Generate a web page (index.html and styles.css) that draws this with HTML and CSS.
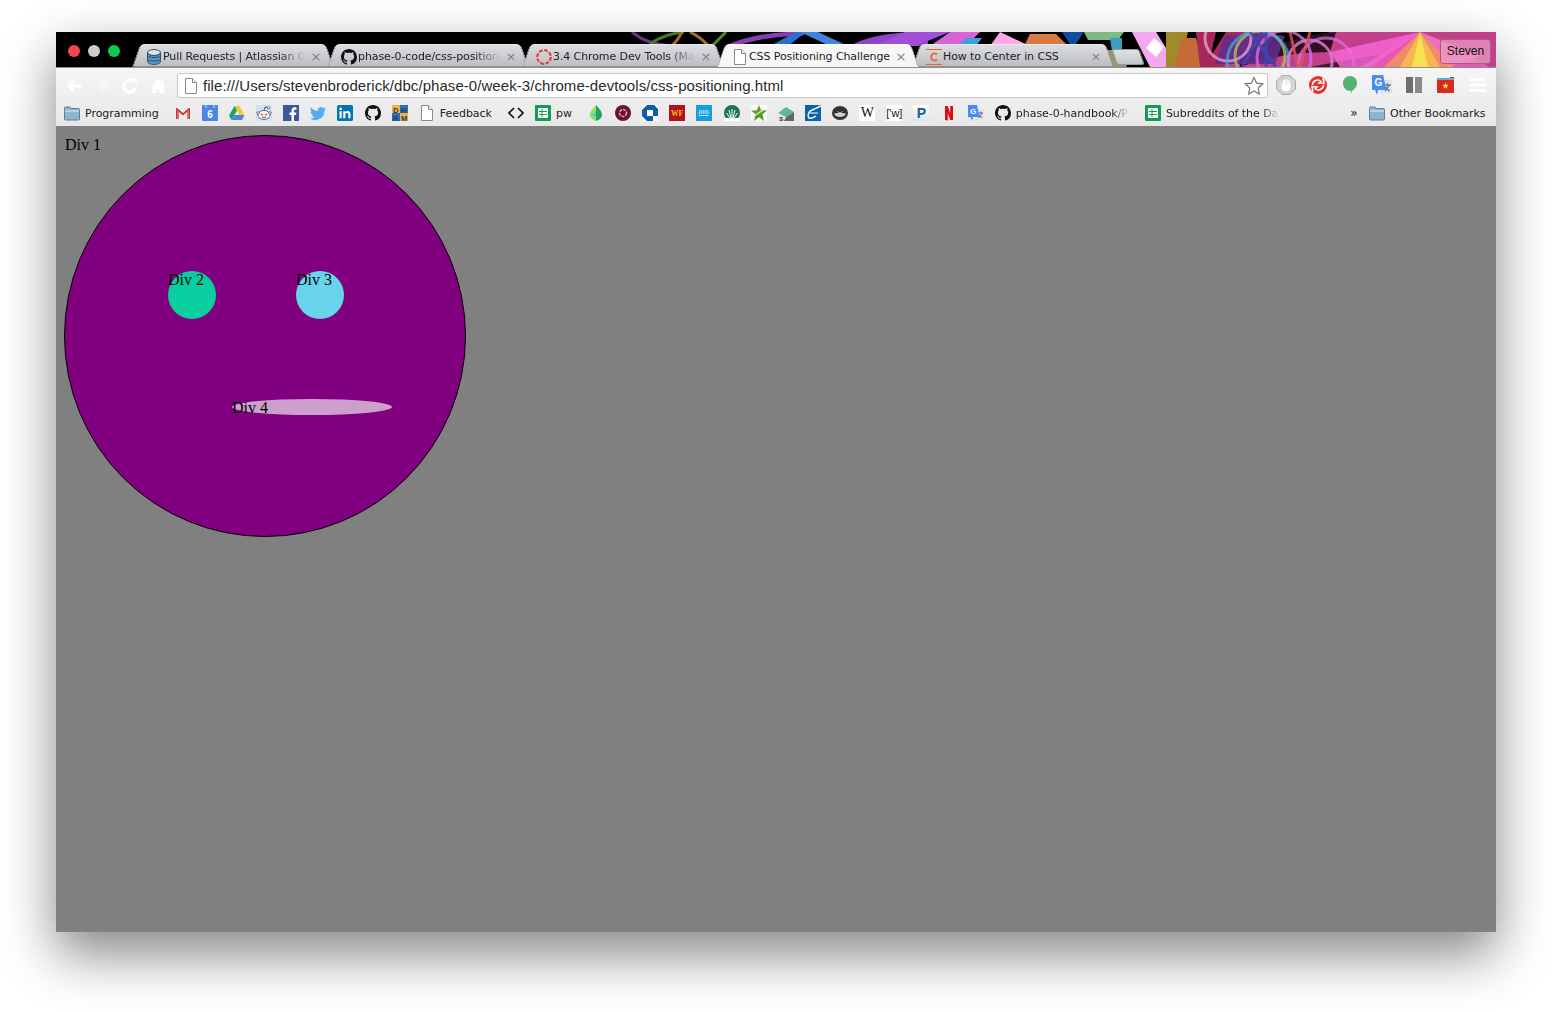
FILE: index.html
```html
<!DOCTYPE html>
<html lang="en">
<head>
    <meta charset="UTF-8">
    <title>CSS Positioning Challenge</title>
    <link rel="stylesheet" href="styles.css">
</head>
<body>

    <!-- shared icons -->
    <svg class="defs" aria-hidden="true">
        <symbol id="i-folder" viewBox="0 0 16 16">
            <path d="M.5 3.5V14a1 1 0 0 0 1 1h13a1 1 0 0 0 1-1V4.5a1 1 0 0 0-1-1H7L6 2H1.5a1 1 0 0 0-1 1.5z" fill="#8fb4cf" stroke="#5d7f9b"/>
            <path d="M1 5h14v2H1z" fill="#b9d2e4"/>
        </symbol>
        <symbol id="i-doc" viewBox="0 0 16 16">
            <path d="M2.5 .5h7l4 4v11h-11z" fill="#fff" stroke="#8a8a8a"/>
            <path d="M9.5 .5v4h4" fill="#eee" stroke="#8a8a8a"/>
        </symbol>
        <symbol id="i-octo" viewBox="0 0 16 16">
            <path d="M8 0C3.58 0 0 3.58 0 8c0 3.54 2.29 6.53 5.47 7.59.4.07.55-.17.55-.38 0-.19-.01-.82-.01-1.49-2.01.37-2.53-.49-2.69-.94-.09-.23-.48-.94-.82-1.13-.28-.15-.68-.52-.01-.53.63-.01 1.08.58 1.23.82.72 1.21 1.87.87 2.33.66.07-.52.28-.87.51-1.07-1.78-.2-3.64-.89-3.64-3.95 0-.87.31-1.59.82-2.15-.08-.2-.36-1.02.08-2.12 0 0 .67-.21 2.2.82.64-.18 1.32-.27 2-.27.68 0 1.36.09 2 .27 1.53-1.04 2.2-.82 2.2-.82.44 1.1.16 1.92.08 2.12.51.56.82 1.27.82 2.15 0 3.07-1.87 3.75-3.65 3.95.29.25.54.73.54 1.48 0 1.07-.01 1.93-.01 2.2 0 .21.15.46.55.38A8.013 8.013 0 0 0 16 8c0-4.42-3.58-8-8-8z" fill="#111"/>
        </symbol>
        <symbol id="i-sheet" viewBox="0 0 16 16">
            <rect width="16" height="16" rx="1" fill="#0f9d58"/>
            <path d="M3.5 3.5h9v9h-9z" fill="#fff" stroke="#fff"/>
            <path d="M4 6.500h8M4 9.500h8M7 4v8" stroke="#0f9d58"/>
        </symbol>
        <symbol id="i-translate" viewBox="0 0 16 16">
            <rect x="7" y="4" width="9" height="11" fill="#dfe3e6"/>
            <path d="M10 8h5M12.500 6.500v1.500M10.500 13l3.500-5M11 9.500l3 3.500" stroke="#5f6b75" fill="none"/>
            <path d="M0 0h9l2.500 12H5l-1 4-1.500-4H0z" fill="#4a8af4"/>
            <text x="2" y="9" class="g-mark">G</text>
        </symbol>
    </svg>

    <div class="window">

        <div class="titlebar">
            <svg class="wallpaper" viewBox="56 32 1440 35" preserveAspectRatio="none" aria-hidden="true">
                <rect x="56" y="32" width="1440" height="35" fill="#000"/>
                <g fill="none" stroke-width="3" opacity=".85">
                    <path d="M632 32q14 12 40 14" stroke="#7a3f9c"/>
                    <path d="M650 44q14-10 34-12" stroke="#4d8f2c"/>
                    <path d="M672 46q6-6 10-14" stroke="#d0762a"/>
                    <path d="M690 32q12 6 18 14" stroke="#c2802f"/>
                    <path d="M712 46q8-8 14-14" stroke="#5aa02f"/>
                </g>
                <path d="M724 46q36-16 84-14l-6 4q-40 0-70 12z" fill="#8a3fb0"/>
                <path d="M770 46l26-14h10l-18 14z" fill="#2d6fd0"/>
                <path d="M800 32l30 14h18l-30-14z" fill="#3f84e0"/>
                <path d="M850 46q20-12 60-14h18v14z" fill="#8c44c8"/>
                <path d="M905 32h45l-35 14h-40z" fill="#a14fd8"/>
                <path d="M950 32h30l-14 14h-36z" fill="#d863d8"/>
                <path d="M966 38h16l-6 8h-18z" fill="#3f9fdc"/>
                <path d="M1000 32l30 14h-40z" fill="#ffa8e8"/>
                <path d="M1030 34h26l12 12h-44z" fill="#d97a45"/>
                <path d="M1062 32h22l-8 12h-6z" fill="#0e4d9e"/>
                <path d="M1084 32h40l-6 8h-30z" fill="#7dbb83"/>
                <path d="M1110 38h12v28h-8z" fill="#3d9cc0"/>
                <path d="M1095 50h24l8 17h-22z" fill="#8f9a72"/>
                <path d="M1132 32h24l22 35h-28z" fill="#f4a8f0"/>
                <path d="M1154 38l10 9-8 10-10-9z" fill="#fff"/>
                <path d="M1166 32h22l-8 35h-14z" fill="#a08a2a"/>
                <path d="M1182 38h14l8 29h-30z" fill="#c76a3a"/>
                <path d="M1196 32h20l-8 35h-8z" fill="#a8285a"/>
                <path d="M1204 67l22-35h50l-20 35z" fill="#a8285a"/>
                <path d="M1222 67q50-26 110-35h164v35z" fill="#c23f8a"/>
                <path d="M1240 52q40-16 96-20l-6 20q-50 0-90 15z" fill="#000" opacity=".75"/>
                <path d="M1310 67q60-12 100-16v16z" fill="#000" opacity=".6"/>
                <path d="M1225 36q40-4 60 0l-10 28h-60z" fill="#5f2d8c" opacity=".9"/>
                <g fill="none" stroke-width="3">
                    <circle cx="1228" cy="38" r="23" stroke="#f0b0e0" opacity=".7"/>
                    <circle cx="1260" cy="56" r="25" stroke="#a8c060" opacity=".8"/>
                    <circle cx="1258" cy="62" r="31" stroke="#4aa6d8" opacity=".7"/>
                    <circle cx="1284" cy="58" r="27" stroke="#d070e0" opacity=".8"/>
                    <circle cx="1310" cy="62" r="22" stroke="#e080d0" opacity=".8"/>
                    <circle cx="1326" cy="66" r="28" stroke="#e070e8" opacity=".7"/>
                    <path d="M1250 32l26 35M1266 32v35M1262 32l-20 35" stroke="#3a48b8" opacity=".8"/>
                    <path d="M1290 32l8 35M1310 32l-10 35" stroke="#e0525a" opacity=".8"/>
                </g>
                <path d="M1360 67l60-35 70 35z" fill="#e758b4"/>
                <path d="M1330 52l90-20-50 35h-30z" fill="#f768d8" opacity=".8"/>
                <path d="M1420 32l60 24-30 11h-60z" fill="#ee70b8"/>
                <path d="M1384 67l36-35 34 35z" fill="#f08a6a"/>
                <path d="M1400 67l20-35 20 35z" fill="#f6b84e"/>
                <path d="M1412 67l8-35 8 35z" fill="#f8e050"/>
            </svg>

            <div class="lights">
                <span class="light red"></span>
                <span class="light grey"></span>
                <span class="light green"></span>
            </div>

            <div class="tabs">
                <div class="tab">
                    <svg class="tab-icon" viewBox="0 0 16 16">
                        <ellipse cx="8" cy="3.500" rx="6.500" ry="3" fill="#dfe6ec" stroke="#35506a"/>
                        <path d="M1.500 3.500v9c0 1.700 3 3 6.500 3s6.500-1.300 6.500-3v-9c0 1.700-3 3-6.500 3s-6.500-1.300-6.500-3z" fill="#5a93c4" stroke="#35506a"/>
                        <path d="M1.500 7c1 2 12 2 13 0M1.500 10.500c1 2 12 2 13 0" fill="none" stroke="#2f4f6f"/>
                    </svg>
                    <span class="tab-title fade">Pull Requests | Atlassian G</span>
                    <span class="tab-close">&#215;</span>
                </div>
                <div class="tab">
                    <svg class="tab-icon" viewBox="0 0 16 16"><use href="#i-octo"/></svg>
                    <span class="tab-title fade">phase-0-code/css-position</span>
                    <span class="tab-close">&#215;</span>
                </div>
                <div class="tab">
                    <svg class="tab-icon" viewBox="0 0 16 16">
                        <circle cx="8" cy="8" r="6.800" fill="none" stroke="#e8403a" stroke-width="2.200" stroke-dasharray="3.800 1.530"/>
                    </svg>
                    <span class="tab-title fade">3.4 Chrome Dev Tools (Mar</span>
                    <span class="tab-close">&#215;</span>
                </div>
                <div class="tab active">
                    <svg class="tab-icon tab-icon-doc" viewBox="0 0 16 16"><use href="#i-doc"/></svg>
                    <span class="tab-title">CSS Positioning Challenge</span>
                    <span class="tab-close">&#215;</span>
                </div>
                <div class="tab">
                    <svg class="tab-icon" viewBox="0 0 16 16">
                        <path d="M0 .5h16M0 15.500h16" stroke="#f0603a"/>
                        <path d="M11 5.500A3.500 3.500 0 1 0 11 10.500" fill="none" stroke="#f0603a" stroke-width="1.800"/>
                    </svg>
                    <span class="tab-title">How to Center in CSS</span>
                    <span class="tab-close">&#215;</span>
                </div>
                <div class="new-tab"></div>
            </div>

            <div class="profile">Steven</div>
        </div>

        <div class="chrome">
            <div class="toolbar">
                <div class="nav-btns">
                    <svg class="nav-icon" viewBox="0 0 16 16"><path d="M15 8H4M8 3 3 8l5 5" fill="none" stroke="#fff" stroke-width="3"/></svg>
                    <svg class="nav-icon faint" viewBox="0 0 16 16"><path d="M1 8h11M8 3l5 5-5 5" fill="none" stroke="#fff" stroke-width="3"/></svg>
                    <svg class="nav-icon" viewBox="0 0 16 16"><path d="M13.500 9.500A6 6 0 1 1 11.500 3.500" fill="none" stroke="#fff" stroke-width="3"/><path d="M9 0h6v6z" fill="#fff"/></svg>
                    <svg class="nav-icon" viewBox="0 0 16 16"><path d="M8 1 0 9h2.500v6h4v-4h3v4h4V9H16l-3-3V2h-2v2z" fill="#fff"/></svg>
                </div>
                <div class="omnibox">
                    <svg class="omni-doc" viewBox="0 0 16 16"><use href="#i-doc"/></svg>
                    <span class="url">file:///Users/stevenbroderick/dbc/phase-0/week-3/chrome-devtools/css-positioning.html</span>
                    <svg class="omni-star" viewBox="0 0 20 20"><path d="m10 1.500 2.600 5.600 6.100.7-4.500 4.200 1.200 6.100L10 15l-5.400 3.100 1.200-6.100L1.300 7.800l6.100-.7z" fill="#fff" stroke="#777" stroke-width="1.200"/></svg>
                </div>
                <div class="extensions">
                    <svg class="ext" viewBox="0 0 20 20">
                        <path d="M6 .5h8L19.500 6v8L14 19.500H6L.5 14V6z" fill="#d4d4d4" stroke="#aaa"/>
                        <path d="M5.500 8v4c0 3 2 4.500 4.500 4.500s4.500-1.500 4.500-4.500V6.500h-1.200V10h-.6V4.800h-1.300V10h-.6V4h-1.300v6h-.6V5H7.100v6.500H6.500V8z" fill="#fff"/>
                    </svg>
                    <svg class="ext" viewBox="0 0 20 20">
                        <circle cx="10" cy="10" r="9" fill="#e8332c"/>
                        <path d="M4.500 10a5 5 0 0 1 8.500-3.500l-2 1.500 5 .5-.5-4.500-1 1M15.500 10A5 5 0 0 1 7 13.500l2-1.500-5-.5.5 4.500 1-1" fill="none" stroke="#fff" stroke-width="1.500"/>
                    </svg>
                    <svg class="ext" viewBox="0 0 20 20"><path d="M10 1c4 0 7 3 7 7 0 4-3 6.500-5 8l-1 3v-3C6 16 3 12.500 3 8c0-4 3-7 7-7z" fill="#52b46e"/></svg>
                    <svg class="ext" viewBox="0 0 16 16"><use href="#i-translate"/></svg>
                    <svg class="ext" viewBox="0 0 20 20"><rect x="2" y="2" width="7" height="16" fill="#6e6e6e"/><rect x="11" y="2" width="7" height="16" fill="#8a8a8a"/></svg>
                    <svg class="ext" viewBox="0 0 20 20">
                        <path d="M1 3h12l2-1h3v16H1z" fill="#d8291f"/>
                        <path d="M1 3h17v2H1z" fill="#5db0c8"/>
                        <path d="m9.500 7.500 1 2.200 2.300.2-1.800 1.500.6 2.300-2.100-1.200-2.100 1.200.6-2.300L6.200 9.900l2.300-.2z" fill="#f6d46a"/>
                    </svg>
                    <svg class="ext" viewBox="0 0 20 20"><path d="M2 3h16v3H2zM2 8.500h16v3H2zM2 14h16v3H2z" fill="#fff"/></svg>
                </div>
            </div>

            <div class="bookmarks">
                <div class="bm text"><svg class="bm-icon" viewBox="0 0 16 16"><use href="#i-folder"/></svg><span>Programming</span></div>
                <div class="bm"><svg class="bm-icon" viewBox="0 0 16 16"><path d="M1 3v11h3V7l4 3.500L12 7v7h3V3h-1L8 8 2 3z" fill="#c8372d"/><path d="M4 14V7L2 5.200V14zM12 14V7l2-1.800V14z" fill="#d9d9d9" opacity=".4"/></svg></div>
                <div class="bm"><svg class="bm-icon" viewBox="0 0 16 16"><rect width="16" height="16" rx="1" fill="#4a86e8"/><path d="M4 0v3M12 0v3" stroke="#cfe0fb"/><text x="8" y="13" class="cal-mark">6</text></svg></div>
                <div class="bm"><svg class="bm-icon" viewBox="0 0 16 16"><path d="M5.500 1h5l5 9h-5z" fill="#f7c631"/><path d="M5.500 1 0 10.500 2.500 15l5.500-9.500z" fill="#1ea362"/><path d="M2.500 15h10.500l2.500-5H5.500z" fill="#4a86e8"/></svg></div>
                <div class="bm"><svg class="bm-icon" viewBox="0 0 16 16"><rect width="16" height="16" fill="#cee3f8"/><ellipse cx="8" cy="10" rx="6" ry="4.500" fill="#fff" stroke="#333" stroke-width=".7"/><circle cx="5.700" cy="9.500" r="1.100" fill="#e8452c"/><circle cx="10.300" cy="9.500" r="1.100" fill="#e8452c"/><path d="M5.500 12q2.500 1.500 5 0M8 5.500 9 2l3 .7" fill="none" stroke="#333" stroke-width=".8"/><circle cx="12.500" cy="2.800" r="1.200" fill="#fff" stroke="#333" stroke-width=".6"/><circle cx="2" cy="8" r="1.300" fill="#fff" stroke="#333" stroke-width=".6"/><circle cx="14" cy="8" r="1.300" fill="#fff" stroke="#333" stroke-width=".6"/></svg></div>
                <div class="bm"><svg class="bm-icon" viewBox="0 0 16 16"><rect width="16" height="16" fill="#3b5998"/><path d="M11 16V10h2l.4-2.500H11V6c0-.8.3-1.300 1.300-1.300h1.200V2.500C13.200 2.400 12.500 2.300 11.700 2.300 9.800 2.300 8.500 3.500 8.500 5.600v1.900h-2V10h2v6z" fill="#fff"/></svg></div>
                <div class="bm"><svg class="bm-icon" viewBox="0 0 16 16"><path d="M16 3.500c-.6.300-1.200.4-1.900.5.700-.4 1.200-1 1.400-1.800-.6.400-1.300.6-2.100.8a3.300 3.300 0 0 0-5.600 3C5.100 5.800 2.700 4.500 1.100 2.500c-.9 1.500-.4 3.400 1 4.400-.5 0-1-.2-1.500-.4 0 1.600 1.100 3 2.600 3.300-.5.100-1 .1-1.500 0 .4 1.300 1.600 2.200 3.100 2.300A6.600 6.600 0 0 1 0 13.500 9.300 9.300 0 0 0 14.400 5.200c.6-.5 1.200-1 1.600-1.700z" fill="#55acee"/></svg></div>
                <div class="bm"><svg class="bm-icon" viewBox="0 0 16 16"><rect width="16" height="16" rx="1.500" fill="#0077b5"/><path d="M2.500 6.200h2.200v7H2.500zM6.200 6.200h2.100v1c.4-.7 1.200-1.200 2.300-1.200 2.200 0 2.900 1.400 2.900 3.400v3.800h-2.200V9.800c0-.9-.2-1.800-1.300-1.800s-1.600.8-1.600 1.800v3.400H6.200z" fill="#fff"/><circle cx="3.600" cy="3.900" r="1.300" fill="#fff"/></svg></div>
                <div class="bm"><svg class="bm-icon" viewBox="0 0 16 16"><use href="#i-octo"/></svg></div>
                <div class="bm"><svg class="bm-icon" viewBox="0 0 16 16"><rect width="8" height="8" x="0" fill="#f4b23e"/><rect width="8" height="8" x="8" fill="#2f6db5"/><rect width="8" height="8" y="8" fill="#2f6db5"/><rect width="8" height="8" x="8" y="8" fill="#f4b23e"/><text x="1" y="7.500" class="dh-mark">D</text><text x="9" y="7.500" class="dh-mark">H</text><text x="1" y="15.500" class="dh-mark">R</text><text x="9" y="15.500" class="dh-mark">M</text></svg></div>
                <div class="bm text"><svg class="bm-icon" viewBox="0 0 16 16"><use href="#i-doc"/></svg><span>Feedback</span></div>
                <div class="bm"><svg class="bm-icon" viewBox="0 0 16 16"><path d="M6 3 1 8l5 5M10 3l5 5-5 5" fill="none" stroke="#111" stroke-width="1.600"/></svg></div>
                <div class="bm text"><svg class="bm-icon" viewBox="0 0 16 16"><use href="#i-sheet"/></svg><span>pw</span></div>
                <div class="bm"><svg class="bm-icon" viewBox="0 0 16 16"><path d="M8 0C5 3.500 2 6 2 10c0 3 3 5 6 6z" fill="#8fe070"/><path d="M8 0c3 3.500 6 6 6 10 0 3-3 5-6 6z" fill="#1ea362"/><path d="M3 10q3-1 5-4v6z" fill="#5ec8b0"/></svg></div>
                <div class="bm"><svg class="bm-icon" viewBox="0 0 16 16"><circle cx="8" cy="8" r="8" fill="#6e1230"/><circle cx="8" cy="8" r="3.500" fill="none" stroke="#d8a8b8" stroke-width="1.600" stroke-dasharray="3 1"/></svg></div>
                <div class="bm"><svg class="bm-icon" viewBox="0 0 16 16"><rect width="16" height="16" fill="#fff"/><path d="M5 0h7l4 4v7h-5V5H5zM0 5l5-5v11h6v5H5l-5-5z" fill="#0f5ba7"/></svg></div>
                <div class="bm"><svg class="bm-icon" viewBox="0 0 16 16"><rect width="16" height="16" fill="#b0121b"/><text x="8" y="11" class="wf-mark">WF</text></svg></div>
                <div class="bm"><svg class="bm-icon" viewBox="0 0 16 16"><rect width="16" height="16" fill="#16a0db"/><path d="M3 6h10M2.500 8h11M3 10.500h10" stroke="#fff" stroke-dasharray="1.500 .5"/></svg></div>
                <div class="bm"><svg class="bm-icon" viewBox="0 0 16 16"><circle cx="8" cy="8" r="8" fill="#1f6f5c"/><path d="M8 4v9M5 5l2 8M11 5l-2 8M2.500 8 6 13M13.500 8 10 13" stroke="#fff"/><path d="M0 13h16v3H0z" fill="#fff"/></svg></div>
                <div class="bm"><svg class="bm-icon" viewBox="0 0 16 16"><rect width="16" height="16" fill="#fbfbfb"/><path d="m8 0 2.200 5.500H16l-4.600 3.800L13 16l-5-3.700L3 16l1.600-6.700L0 5.500h5.800z" fill="#5a9a2a"/><path d="M3 11 12 5" stroke="#d9e8c8" stroke-width="1.500"/></svg></div>
                <div class="bm"><svg class="bm-icon" viewBox="0 0 16 16"><path d="M0 8 8 2l8 5-8 5z" fill="#5fb89a"/><path d="M8 12l8-5v9H6z" fill="#666"/><path d="M0 9v7h6v-4z" fill="#d9ece5"/><text x="1" y="15.500" class="s-mark">s</text></svg></div>
                <div class="bm"><svg class="bm-icon" viewBox="0 0 16 16"><rect width="16" height="16" fill="#0a64ad"/><path d="M16 1 5 6q-3 4-1 7 3 1 7-2" fill="none" stroke="#fff" stroke-width="1.400"/><path d="M5 8h8" stroke="#fff"/></svg></div>
                <div class="bm"><svg class="bm-icon" viewBox="0 0 16 16"><ellipse cx="8" cy="8" rx="8" ry="7" fill="#333"/><ellipse cx="8" cy="9" rx="5.500" ry="3" fill="#cfcfcf"/><path d="M3 8q5-3 10 0" fill="none" stroke="#111"/></svg></div>
                <div class="bm"><span class="wiki">W</span></div>
                <div class="bm"><span class="wiki wiki-w">['w]</span></div>
                <div class="bm"><span class="wiki pmark">P</span></div>
                <div class="bm"><svg class="bm-icon" viewBox="0 0 16 16"><path d="M4 1h2.800l2.400 7V1H12v14H9.200L6.800 8v7.500L4 15z" fill="#e50914"/></svg></div>
                <div class="bm"><svg class="bm-icon" viewBox="0 0 16 16"><use href="#i-translate"/></svg></div>
                <div class="bm text"><svg class="bm-icon" viewBox="0 0 16 16"><use href="#i-octo"/></svg><span class="bm-fade">phase-0-handbook/P</span></div>
                <div class="bm text"><svg class="bm-icon" viewBox="0 0 16 16"><use href="#i-sheet"/></svg><span class="bm-fade">Subreddits of the Da</span></div>
                <div class="bm-end">
                    <span class="more">&raquo;</span>
                    <div class="bm text"><svg class="bm-icon" viewBox="0 0 16 16"><use href="#i-folder"/></svg><span>Other Bookmarks</span></div>
                </div>
            </div>
        </div>

        <!-- the page on show in the browser -->
        <div class="page">
            <div class="face">
                Div 1
                <div class="feature eye eye-left">Div 2</div>
                <div class="feature eye eye-right">Div 3</div>
                <div class="feature mouth">Div 4</div>
            </div>
        </div>
    </div>

</body>
</html>
```

FILE: styles.css
```css
html, body {
    margin: 0;
    height: 100%;
}
body {
    background: #fff;
    padding: 32px 56px 80px;
    box-sizing: border-box;
    overflow: hidden;
    font-family: "DejaVu Sans", sans-serif;
}
.defs {
    display: none;
}
.window {
    height: 900px;
    display: flex;
    flex-direction: column;
    box-shadow: 0 22px 50px rgba(0, 0, 0, 0.48);
}

/* title bar */
.titlebar {
    position: relative;
    height: 35px;
    display: flex;
    background: #000;
    border-bottom: 1px solid #8f8f8f;
    flex: none;
}
.wallpaper {
    position: absolute;
    top: 0;
    left: 0;
    width: 100%;
    height: 100%;
}
.lights {
    position: relative;
    display: flex;
    gap: 8px;
    padding: 13px 0 0 12px;
    width: 77px;
    box-sizing: border-box;
}
.light {
    width: 12px;
    height: 12px;
    border-radius: 50%;
}
.red { background: #f5444f; }
.grey { background: #cccccc; }
.green { background: #0cc94f; }

.tabs {
    position: relative;
    display: flex;
    margin-top: 12px;
    height: 23px;
}
.tab {
    position: relative;
    width: 195px;
    display: flex;
    align-items: center;
    padding: 2px 5px 0 13px;
    box-sizing: border-box;
    font-size: 11px;
    letter-spacing: -0.1px;
    color: #222;
    z-index: 1;
}
.tab::before, .tab::after {
    content: "";
    position: absolute;
    top: 0;
    bottom: 0;
    width: 55%;
    z-index: -1;
    box-sizing: border-box;
    background: linear-gradient(#dcdde0, #bdbec1);
    border-top: 1px solid #e9e9ea;
    border-bottom: 1px solid #8f8f8f;
}
.tab::before {
    left: 3px;
    border-left: 1px solid #9a9a9c;
    border-top-left-radius: 5px;
    transform: skewX(-19deg);
}
.tab::after {
    right: -2px;
    border-right: 1px solid #9a9a9c;
    border-top-right-radius: 5px;
    transform: skewX(19deg);
}
.tab.active {
    z-index: 2;
}
.tab.active::before, .tab.active::after {
    background: #f6f6f6;
    border-top-color: #fff;
    border-bottom: none;
}
.tab-icon {
    width: 16px;
    height: 16px;
    flex: none;
    margin-right: 1px;
}
.tab-icon-doc {
    margin-left: 1px;
}
.tab-title {
    flex: 1;
    white-space: nowrap;
    overflow: hidden;
    min-width: 0;
}
.fade {
    -webkit-mask-image: linear-gradient(to right, #000 82%, transparent 100%);
    mask-image: linear-gradient(to right, #000 82%, transparent 100%);
}
.tab-close {
    width: 14px;
    margin-left: 4px;
    flex: none;
    text-align: center;
    font-size: 13px;
    color: #808080;
}
.new-tab {
    width: 26px;
    height: 14px;
    margin: 5px 0 0 6px;
    background: linear-gradient(#e1e2e4, #c4c5c8);
    border: 1px solid #9a9a9c;
    border-radius: 3px;
    transform: skewX(19deg);
}
.profile {
    position: absolute;
    top: 7px;
    right: 5px;
    width: 51px;
    height: 25px;
    box-sizing: border-box;
    border: 1px solid #a85c84;
    border-radius: 3px;
    background: rgba(236, 160, 198, 0.7);
    color: #111;
    font: 12px/23px "Liberation Sans", sans-serif;
    text-align: center;
}

/* toolbar and bookmarks */
.chrome {
    flex: none;
    background: linear-gradient(#f5f5f5, #e8e8e8);
}
.toolbar {
    height: 30px;
    display: flex;
    align-items: flex-start;
}
.nav-btns {
    display: flex;
    width: 121px;
    padding: 10px 0 0 10px;
    gap: 12px;
    box-sizing: border-box;
}
.nav-icon {
    width: 16px;
    height: 16px;
}
.nav-icon.faint {
    opacity: 0.4;
}
.omnibox {
    width: 1091px;
    height: 25px;
    margin-top: 5px;
    box-sizing: border-box;
    display: flex;
    align-items: center;
    background: #fff;
    border: 1px solid #c6c6c6;
    border-radius: 3px;
    padding: 0 3px 0 5px;
}
.omni-doc {
    width: 16px;
    height: 16px;
    flex: none;
}
.url {
    flex: 1;
    margin-left: 4px;
    font: 15px "Liberation Sans", sans-serif;
    letter-spacing: 0.06px;
    color: #2a2a2a;
    white-space: nowrap;
}
.omni-star {
    width: 20px;
    height: 20px;
    flex: none;
}
.extensions {
    display: flex;
    gap: 12px;
    padding: 7px 0 0 8px;
}
.ext {
    width: 20px;
    height: 20px;
}
.g-mark {
    font: bold 8px "Liberation Sans", sans-serif;
    fill: #fff;
}

.bookmarks {
    height: 28px;
    display: flex;
    align-items: center;
    padding: 2px 5.5px 0 2.5px;
    box-sizing: border-box;
    font-size: 11px;
    letter-spacing: -0.05px;
    color: #222;
}
.bm {
    display: flex;
    align-items: center;
    gap: 5px;
    padding: 0 5.57px;
    flex: none;
}
.bm.text {
    padding-right: 10.5px;
}
.bm-icon {
    width: 16px;
    height: 16px;
    flex: none;
}
.bm-fade {
    width: 113px;
    white-space: nowrap;
    overflow: hidden;
    -webkit-mask-image: linear-gradient(to right, #000 85%, transparent 100%);
    mask-image: linear-gradient(to right, #000 85%, transparent 100%);
}
.bm-end {
    margin-left: auto;
    display: flex;
    align-items: center;
}
.bm-end .bm.text {
    padding-right: 5px;
}
.more {
    margin-right: 6px;
    font-size: 12px;
}
.wiki {
    width: 16px;
    height: 16px;
    background: #fff;
    font: 14px/16px "Liberation Serif", serif;
    color: #111;
    text-align: center;
}
.wiki-w {
    font: 11px/16px "Liberation Sans", sans-serif;
}
.pmark {
    font: bold 14px/16px "Liberation Sans", sans-serif;
    color: #1c5a90;
    background: linear-gradient(#fff, #dde4ea);
}
.cal-mark {
    font: bold 10px "Liberation Sans", sans-serif;
    fill: #fff;
    text-anchor: middle;
}
.dh-mark {
    font: bold 7.5px "Liberation Sans", sans-serif;
    fill: #1c3f70;
}
.wf-mark {
    font: bold 7.5px "Liberation Serif", serif;
    fill: #f6c51c;
    text-anchor: middle;
}
.s-mark {
    font: bold 8px "Liberation Sans", sans-serif;
    fill: #444;
}

/* the page itself */
.page {
    flex: 1;
    background: #808080;
    padding: 9px 8px;
    font: 16px "Liberation Serif", serif;
    color: #000;
}
.face {
    position: relative;
    width: 400px;
    height: 400px;
    background: #800080;
    border: 1px solid #000;
    border-radius: 50%;
}
.feature {
    position: absolute;
}
.eye {
    top: 135px;
    width: 48px;
    height: 48px;
    border-radius: 50%;
}
.eye-left {
    left: 103px;
    background: #09cfa0;
}
.eye-right {
    left: 231px;
    background: #67d4ea;
}
.mouth {
    left: 167px;
    top: 263px;
    width: 160px;
    height: 16px;
    border-radius: 50%;
    background: #cc9fcc;
}
```
